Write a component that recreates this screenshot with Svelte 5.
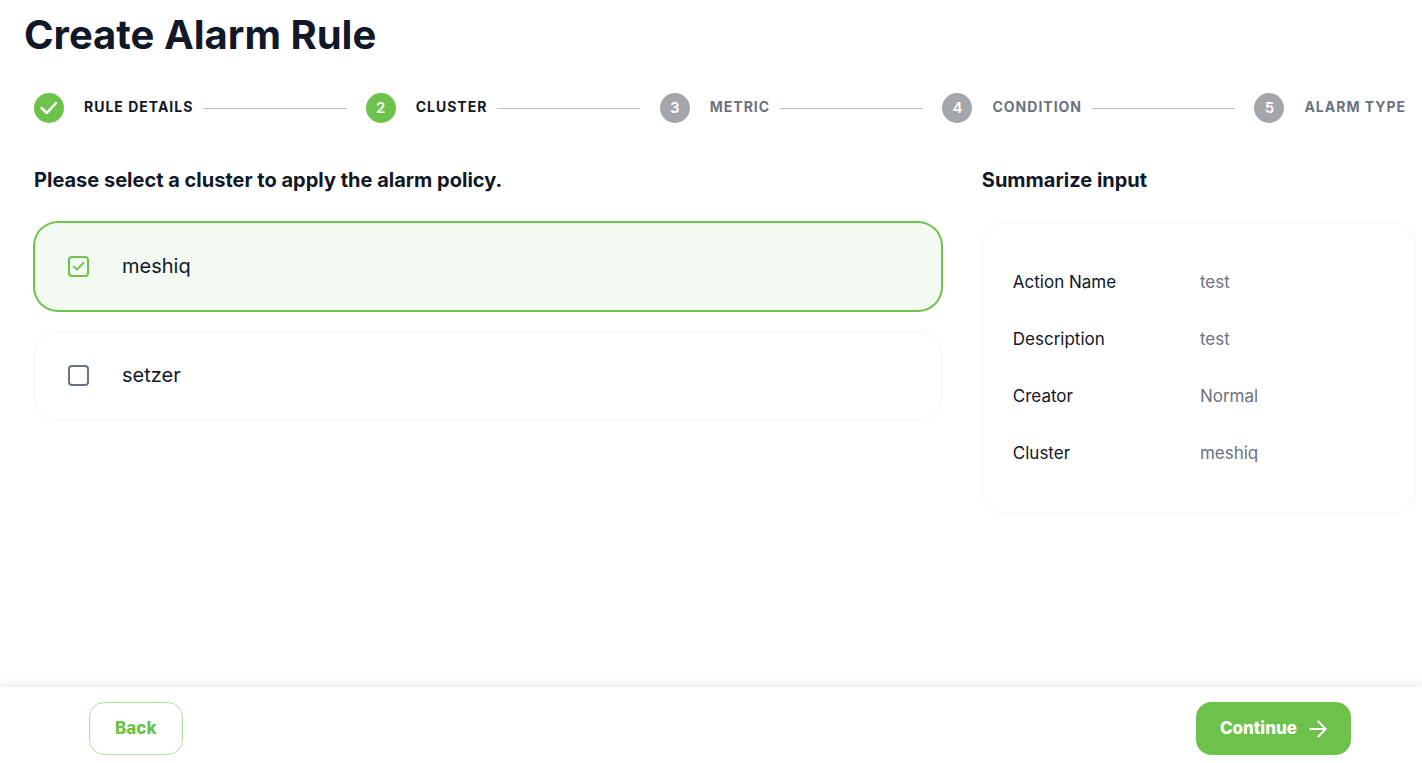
<script lang="ts">
  type Cluster = { id: string; name: string };

  const steps = ["Rule Details", "Cluster", "Metric", "Condition", "Alarm Type"];
  let current = $state(2);

  const clusters: Cluster[] = [
    { id: "meshiq", name: "meshiq" },
    { id: "setzer", name: "setzer" },
  ];
  let selected = $state("meshiq");

  const summary = $derived([
    { label: "Action Name", value: "test" },
    { label: "Description", value: "test" },
    { label: "Creator", value: "Normal" },
    { label: "Cluster", value: selected },
  ]);

  const toggle = (id: string) => {
    selected = selected === id ? "" : id;
  };
  const back = () => {
    if (current > 1) current -= 1;
  };
  const next = () => {
    if (current < steps.length) current += 1;
  };
</script>

<div class="page">
  <main>
    <h1>Create Alarm Rule</h1>

    <ol class="stepper">
      {#each steps as step, i}
        <li class="step" class:active={i + 1 <= current}>
          <span class="dot">
            {#if i + 1 < current}
              <svg width="20" height="20" viewBox="0 0 20 20" fill="none" aria-hidden="true">
                <path d="M2.6 10 7.8 15 17 5.2" stroke="#fff" stroke-width="2.5" stroke-linecap="round" stroke-linejoin="round" />
              </svg>
            {:else}
              {i + 1}
            {/if}
          </span>
          <span class="step-name">{step}</span>
        </li>
      {/each}
    </ol>

    <div class="columns">
      <section>
        <h2>Please select a cluster to apply the alarm policy.</h2>
        <div class="clusters">
          {#each clusters as c (c.id)}
            <label class="cluster" class:checked={selected === c.id}>
              <span class="check">
                <input type="checkbox" checked={selected === c.id} onchange={() => toggle(c.id)} />
                {#if selected === c.id}
                  <svg width="21" height="21" viewBox="0 0 21 21" fill="none" aria-hidden="true">
                    <path d="M5.8 10.6 9 13.6 15.2 7" stroke="currentColor" stroke-width="1.9" stroke-linecap="round" stroke-linejoin="round" />
                  </svg>
                {/if}
              </span>
              <span>{c.name}</span>
            </label>
          {/each}
        </div>
      </section>

      <section>
        <h2>Summarize input</h2>
        <dl class="summary">
          {#each summary as row}
            <div class="row">
              <dt>{row.label}</dt>
              <dd>{row.value}</dd>
            </div>
          {/each}
        </dl>
      </section>
    </div>
  </main>

  <footer>
    <button type="button" class="btn outline" onclick={back}>Back</button>
    <button type="button" class="btn primary" onclick={next}>
      Continue
      <svg width="18" height="18" viewBox="0 0 18 18" fill="none" aria-hidden="true">
        <path d="M1.2 9H16.6M9.2 1.4 16.8 9 9.2 16.6" stroke="currentColor" stroke-width="1.9" stroke-linecap="round" stroke-linejoin="round" />
      </svg>
    </button>
  </footer>
</div>

<style>
  :global(body) {
    background: #fff;
  }

  .page {
    --green: #6cc24a;
    --ink: #111827;
    --muted: #6b7280;
    --line: #f3f4f6;
    display: flex;
    flex-direction: column;
    min-height: 100vh;
    color: var(--ink);
    font-family: Inter, "Liberation Sans", sans-serif;
  }

  main {
    flex: 1;
    padding: 10px 6px 40px 34px;
  }

  h1 {
    margin: 0 0 0 -10px;
    font-size: 40px;
    font-weight: 700;
    line-height: 50px;
  }
  h2 {
    margin: 0 0 28px;
    font-size: 20px;
    font-weight: 700;
    line-height: 28px;
  }

  .stepper {
    display: flex;
    align-items: center;
    gap: 20px;
    margin: 33px 0 43px;
    padding: 0;
    list-style: none;
  }
  .step {
    display: flex;
    flex: 1 1 auto;
    align-items: center;
    color: var(--muted);
  }
  .step:last-child {
    flex: none;
    padding-right: 10px;
  }
  .step:not(:last-child)::after {
    content: "";
    flex: 1;
    height: 1px;
    margin-left: 10px;
    background: #bdbdbd;
  }
  .step.active { color: var(--ink); }
  .dot {
    display: grid;
    place-items: center;
    width: 30px;
    height: 30px;
    margin-right: 20px;
    border-radius: 50%;
    background: #a3a6ab;
    color: #fff;
    font-size: 15px;
    font-weight: 600;
    line-height: 20px;
  }
  .active .dot { background: var(--green); }
  .step-name {
    padding-bottom: 2px;
    font-size: 14px;
    font-weight: 700;
    letter-spacing: 1px;
    line-height: 20px;
    text-transform: uppercase;
    white-space: nowrap;
  }

  .columns {
    display: grid;
    grid-template-columns: minmax(0, 46fr) minmax(0, 22fr);
    gap: 40px;
  }

  .clusters {
    display: grid;
    gap: 20px;
  }
  .cluster {
    display: flex;
    align-items: center;
    gap: 33px;
    padding: 29px 33px;
    border: 1px solid var(--line);
    border-radius: 24px;
    font-size: 20px;
    line-height: 29px;
    cursor: pointer;
  }
  .cluster.checked {
    border-color: var(--green);
    background: #f3faf2;
    box-shadow: 0 0 0 1px var(--green);
  }
  .check {
    display: grid;
    color: var(--green);
  }
  .check input,
  .check svg {
    grid-area: 1 / 1;
  }
  .check svg { pointer-events: none; }
  .check input {
    appearance: none;
    width: 21px;
    height: 21px;
    margin: 0;
    border: 2px solid var(--muted);
    border-radius: 4px;
    cursor: pointer;
  }
  .check input:checked { border-color: var(--green); }

  .summary {
    display: grid;
    gap: 30px;
    margin: 0;
    padding: 46px 30px;
    border: 1px solid var(--line);
    border-radius: 24px;
    font-size: 17px;
    line-height: 27px;
  }
  .row {
    display: grid;
    grid-template-columns: 1fr 1fr;
    gap: 2px;
  }
  dd {
    margin: 0;
    color: var(--muted);
  }

  footer {
    display: flex;
    justify-content: space-between;
    padding: 15px 71px 8px 89px;
    background: #fff;
    box-shadow: 0 0 10px rgba(0, 0, 0, 0.15);
  }
  .btn {
    display: flex;
    align-items: center;
    gap: 12px;
    padding: 12px 23px;
    border: 1px solid var(--green);
    border-radius: 15px;
    font: 800 17px/27px Inter, "Liberation Sans", sans-serif;
    cursor: pointer;
  }
  .outline {
    padding: 12px 25px;
    border-color: #b0dfa0;
    background: #fff;
    color: var(--green);
  }
  .primary {
    background: var(--green);
    color: #fff;
  }
</style>
